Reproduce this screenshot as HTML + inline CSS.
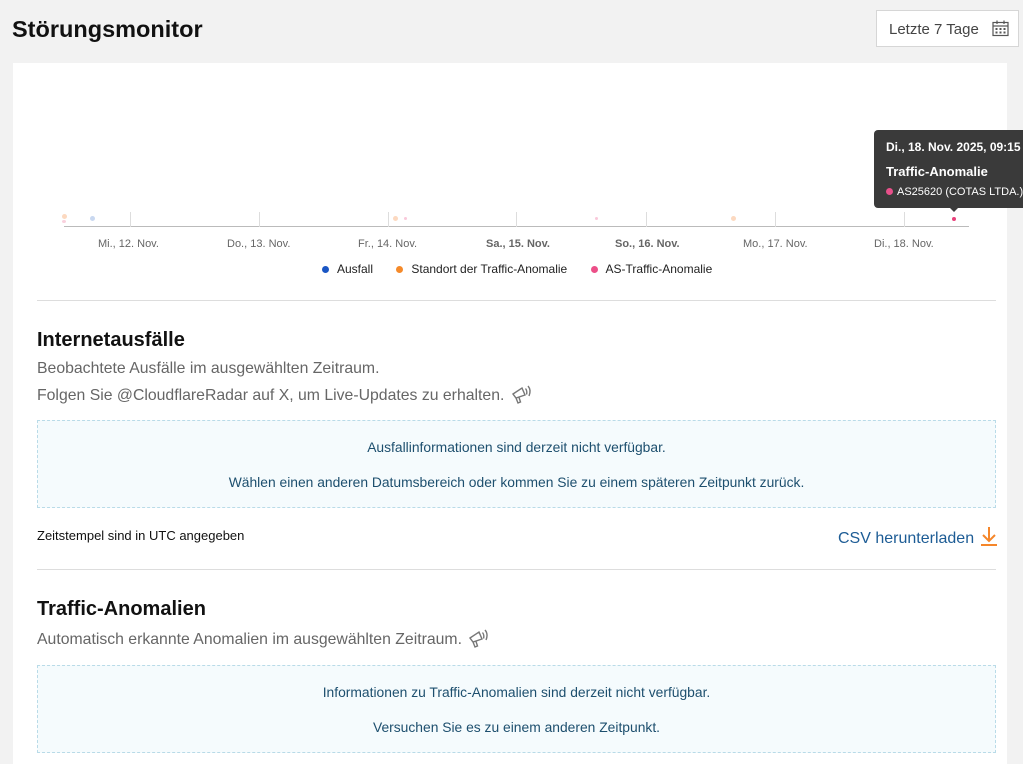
<!DOCTYPE html>
<html><head><meta charset="utf-8"><style>
*{box-sizing:border-box;margin:0;padding:0}
body{width:1023px;height:764px;overflow:hidden;background:#f2f2f2;font-family:"Liberation Sans",sans-serif;position:relative;color:#222}
.abs{position:absolute}
h1{position:absolute;left:12px;top:16px;font-size:23.5px;font-weight:bold;color:#111}
.btn{left:876px;top:10px;width:143px;height:37px;background:#fff;border:1px solid #d6d6d6;font-size:15px;color:#444;padding:10px 0 0 12px}
.card{left:13px;top:63px;width:994px;height:701px;background:#fff}
.tick{position:absolute;top:212px;width:1px;height:15px;background:#ddd}
.lbl{position:absolute;top:238px;font-size:11px;color:#666;white-space:nowrap}
.dot{position:absolute;border-radius:50%}
.sep{position:absolute;left:37px;width:959px;height:1px;background:#ddd}
h2{position:absolute;left:37px;font-size:20px;font-weight:bold;color:#111}
.p{position:absolute;left:37px;font-size:15.8px;color:#666;white-space:nowrap}
.box{position:absolute;left:37px;width:959px;border:1px dashed #b9dbe8;background:#f5fbfd;text-align:center;font-size:13.85px;color:#1d4f6e}
</style></head><body>
<h1>Störungsmonitor</h1>
<div class="abs btn">Letzte 7 Tage
<svg class="abs" style="left:115px;top:9px" width="17" height="17" viewBox="0 0 17 17" fill="none" stroke="#555" stroke-width="1.2"><rect x="1" y="2.5" width="15" height="13"/><line x1="1" y1="6" x2="16" y2="6"/><line x1="5" y1="0.5" x2="5" y2="4"/><line x1="12" y1="0.5" x2="12" y2="4"/><g fill="#555" stroke="none"><rect x="3.5" y="8" width="2" height="2"/><rect x="7.5" y="8" width="2" height="2"/><rect x="11.5" y="8" width="2" height="2"/><rect x="3.5" y="11.5" width="2" height="2"/><rect x="7.5" y="11.5" width="2" height="2"/><rect x="11.5" y="11.5" width="2" height="2"/></g></svg></div>
<div class="abs card"></div>
<div class="abs" style="left:64px;top:226px;width:905px;height:1px;background:#bbb"></div>
<div class="tick" style="left:130px"></div><div class="tick" style="left:259px"></div><div class="tick" style="left:388px"></div><div class="tick" style="left:516px"></div><div class="tick" style="left:646px"></div><div class="tick" style="left:775px"></div><div class="tick" style="left:904px"></div>
<div class="lbl" style="left:98px">Mi., 12. Nov.</div><div class="lbl" style="left:227px">Do., 13. Nov.</div><div class="lbl" style="left:358px">Fr., 14. Nov.</div><div class="lbl" style="left:486px;font-weight:bold">Sa., 15. Nov.</div><div class="lbl" style="left:615px;font-weight:bold">So., 16. Nov.</div><div class="lbl" style="left:743px">Mo., 17. Nov.</div><div class="lbl" style="left:874px">Di., 18. Nov.</div>
<div class="dot" style="left:62px;top:214px;width:5px;height:5px;background:#fcd9c0"></div>
<div class="dot" style="left:62px;top:220px;width:4px;height:3px;background:#f9d0dc"></div>
<div class="dot" style="left:90px;top:216px;width:5px;height:5px;background:#c9d8f0"></div>
<div class="dot" style="left:393px;top:216px;width:5px;height:5px;background:#fcd9c0"></div>
<div class="dot" style="left:404px;top:217px;width:3px;height:3px;background:#f9c9da"></div>
<div class="dot" style="left:595px;top:217px;width:3px;height:3px;background:#f9c9da"></div>
<div class="dot" style="left:731px;top:216px;width:5px;height:5px;background:#fcd9c0"></div>
<div class="dot" style="left:952px;top:217px;width:4px;height:4px;background:#e8407a"></div>
<div class="abs" style="left:874px;top:130px;width:160px;height:78px;background:#3a3a3a;border-radius:4px;color:#fff;padding:10px 12px;white-space:nowrap">
<div style="font-size:12px;font-weight:bold">Di., 18. Nov. 2025, 09:15</div>
<div style="font-size:13px;font-weight:bold;margin-top:10px">Traffic-Anomalie</div>
<div style="font-size:11px;margin-top:7px"><span style="display:inline-block;width:7px;height:7px;border-radius:50%;background:#e8508a;margin-right:4px"></span>AS25620 (COTAS LTDA.)</div></div>
<div class="abs" style="left:949px;top:207px;border:5px solid transparent;border-top-color:#3a3a3a;border-bottom:0"></div>
<div class="abs" style="left:322px;top:262px;font-size:12px;color:#222;white-space:nowrap">
<span style="display:inline-block;width:7px;height:7px;border-radius:50%;background:#1a56c4;margin-right:8px"></span>Ausfall
<span style="display:inline-block;width:7px;height:7px;border-radius:50%;background:#f58a2a;margin:0 8px 0 20px"></span>Standort der Traffic-Anomalie
<span style="display:inline-block;width:7px;height:7px;border-radius:50%;background:#ec4f88;margin:0 8px 0 20px"></span>AS-Traffic-Anomalie</div>
<div class="sep" style="top:300px"></div>
<h2 style="top:329px">Internetausfälle</h2>
<div class="p" style="top:360px">Beobachtete Ausfälle im ausgewählten Zeitraum.</div>
<div class="p" style="top:384px">Folgen Sie @CloudflareRadar auf X, um Live-Updates zu erhalten.
<svg style="vertical-align:-4px;margin-left:2px" width="22" height="20" viewBox="0 0 22 20" fill="none" stroke="#777" stroke-width="1.4"><path d="M2 10l9-6 3 7-9 3z M5 14l2 5 2.5-1-1.5-4.5 M14.5 4.5q2 2.5 1 6 M17 2q3.5 4 1 10"/></svg></div>
<div class="box" style="top:420px;height:88px;padding-top:9px;line-height:35px">Ausfallinformationen sind derzeit nicht verfügbar.<br>Wählen einen anderen Datumsbereich oder kommen Sie zu einem späteren Zeitpunkt zurück.</div>
<div class="abs" style="left:37px;top:528px;font-size:13px;color:#111">Zeitstempel sind in UTC angegeben</div>
<div class="abs" style="left:838px;top:526px;font-size:16px;color:#1d5c95;white-space:nowrap">CSV herunterladen
<svg style="vertical-align:-3px;margin-left:1px" width="18" height="20" viewBox="0 0 18 20" fill="none" stroke="#f5862a" stroke-width="2"><path d="M9 1v14M3 9l6 6 6-6M1 19h16"/></svg></div>
<div class="sep" style="top:569px"></div>
<h2 style="top:598px">Traffic-Anomalien</h2>
<div class="p" style="top:628px">Automatisch erkannte Anomalien im ausgewählten Zeitraum.
<svg style="vertical-align:-4px;margin-left:2px" width="22" height="20" viewBox="0 0 22 20" fill="none" stroke="#777" stroke-width="1.4"><path d="M2 10l9-6 3 7-9 3z M5 14l2 5 2.5-1-1.5-4.5 M14.5 4.5q2 2.5 1 6 M17 2q3.5 4 1 10"/></svg></div>
<div class="box" style="top:665px;height:88px;padding-top:9px;line-height:35px">Informationen zu Traffic-Anomalien sind derzeit nicht verfügbar.<br>Versuchen Sie es zu einem anderen Zeitpunkt.</div>
</body></html>
